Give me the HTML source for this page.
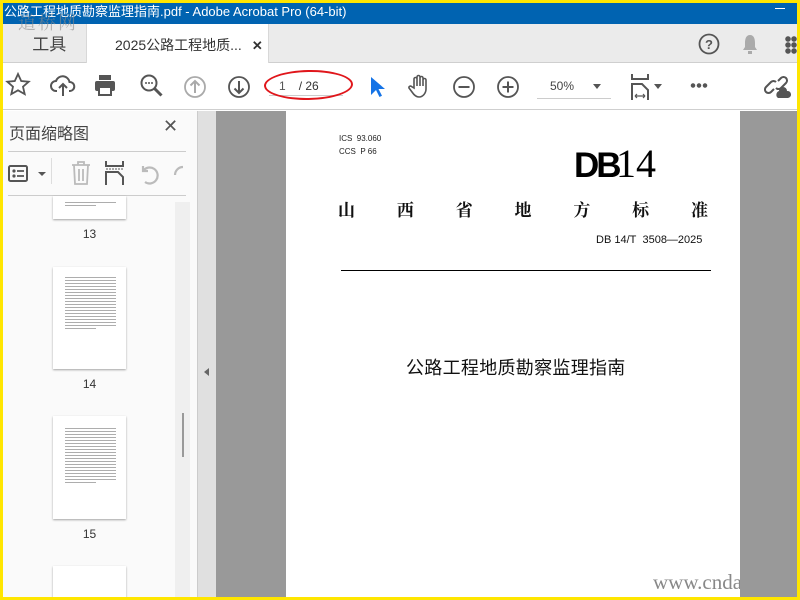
<!DOCTYPE html>
<html><head><meta charset="utf-8"><style>
*{margin:0;padding:0;box-sizing:border-box}
body{width:800px;height:600px;overflow:hidden;background:#ffe600;font-family:"Liberation Sans","Noto Sans CJK SC",sans-serif;position:relative}
.a{position:absolute}
.ic{position:absolute}
.th{position:absolute;left:50px;width:73px;background:#fff;box-shadow:0 1px 2px rgba(0,0,0,.35)}
.th i{display:block;height:1px;background:#777;margin:2px 10px 0 12px;opacity:.6}
.lbl{position:absolute;left:50px;width:73px;text-align:center;font-size:12px;color:#333}
</style></head><body>
<div class="a" style="left:3px;top:3px;width:794px;height:594px;background:#fff;overflow:hidden">
 <div class="a" style="left:0;top:0;width:794px;height:21px;background:#0063b1;color:#fff;font-size:13px;line-height:17px;padding-left:1px">公路工程地质勘察监理指南.pdf - Adobe Acrobat Pro (64-bit)</div>
 <div class="a" style="left:772px;top:5px;width:10px;height:1px;background:#fff"></div>
 <div class="a" style="left:0;top:21px;width:794px;height:39px;background:#ebebeb;border-bottom:1px solid #cfcfcf"></div>
 <div class="a" style="left:15px;top:6px;font-family:'Liberation Serif','Noto Serif CJK SC',serif;font-size:18px;color:#8a8a8a;opacity:.6;letter-spacing:2px">道桥网</div>
 <div class="a" style="left:0;top:21px;width:83px;height:39px;font-size:17px;color:#444;line-height:42px;text-align:center">&nbsp;&nbsp;工具</div>
 <div class="a" style="left:83px;top:21px;width:183px;height:40px;background:#fff;border-left:1px solid #d8d8d8;border-right:1px solid #d8d8d8;font-size:14px;color:#333;line-height:42px;padding-left:28px">2025公路工程地质...<span style="margin-left:10px;font-weight:bold;font-size:13px">✕</span></div>
 <svg class="ic" style="left:695px;top:30px" width="22" height="22"><circle cx="11" cy="11" r="9.5" fill="none" stroke="#555" stroke-width="1.8"/><text x="11" y="16" text-anchor="middle" font-size="13" font-weight="bold" fill="#555" font-family="Liberation Sans">?</text></svg>
 <svg class="ic" style="left:738px;top:30px" width="18" height="22"><path d="M9 2c4 0 5 4 5 8v4l2 3H2l2-3v-4c0-4 1-8 5-8z" fill="#aaa"/><rect x="7" y="18" width="4" height="3" fill="#aaa"/></svg>
 <div class="a" style="left:782px;top:33px;width:12px;height:18px;background:radial-gradient(circle,#555 2.5px,transparent 3px) 0 0/6px 6px"></div>
 <div class="a" style="left:0;top:60px;width:794px;height:47px;background:#fff;border-bottom:1px solid #cfcfcf"></div>
 <svg class="ic" style="left:2px;top:69px" width="26" height="26"><path d="M13 2l3.2 7 7.5.7-5.7 5 1.7 7.4L13 18.3 6.3 22.1 8 14.7 2.3 9.7l7.5-.7z" fill="none" stroke="#555" stroke-width="1.8"/></svg>
 <svg class="ic" style="left:47px;top:70px" width="26" height="26"><path d="M7 18H6a5 5 0 0 1 0-10 7 7 0 0 1 13.5 1A4.5 4.5 0 0 1 20 18h-1" fill="none" stroke="#555" stroke-width="2"/><path d="M13 23V11M9 15l4-4 4 4" fill="none" stroke="#555" stroke-width="2"/></svg>
 <svg class="ic" style="left:90px;top:70px" width="24" height="24"><rect x="6" y="2" width="12" height="5" fill="#555"/><rect x="2" y="8" width="20" height="10" rx="2" fill="#555"/><rect x="6" y="14" width="12" height="8" fill="#fff" stroke="#555" stroke-width="2"/></svg>
 <svg class="ic" style="left:136px;top:70px" width="26" height="26"><circle cx="10" cy="10" r="7.5" fill="none" stroke="#555" stroke-width="2"/><path d="M15.5 15.5l7 7" stroke="#555" stroke-width="3"/><circle cx="7" cy="10" r="1" fill="#555"/><circle cx="10" cy="10" r="1" fill="#555"/><circle cx="13" cy="10" r="1" fill="#555"/></svg>
 <svg class="ic" style="left:180px;top:72px" width="24" height="24"><circle cx="12" cy="12" r="10" fill="none" stroke="#aaa" stroke-width="1.8"/><path d="M12 18V6M7.5 10.5L12 6l4.5 4.5" fill="none" stroke="#aaa" stroke-width="2"/></svg>
 <svg class="ic" style="left:224px;top:72px" width="24" height="24"><circle cx="12" cy="12" r="10" fill="none" stroke="#555" stroke-width="1.8"/><path d="M12 6v12M7.5 13.5L12 18l4.5-4.5" fill="none" stroke="#555" stroke-width="2"/></svg>
 <div class="a" style="left:266px;top:73px;width:74px;height:20px;border-bottom:1px solid #ccc;font-size:12px;color:#333;line-height:20px"><span style="margin-left:10px;color:#555">1</span><span style="margin-left:13px">/ 26</span></div>
 <div class="a" style="left:261px;top:67px;width:89px;height:30px;border:2.5px solid #e0161b;border-radius:50%;transform:rotate(-1deg)"></div>
 <svg class="ic" style="left:366px;top:72px" width="16" height="24"><path d="M2 2v18l5-5 3.5 7 2.5-1.2-3.5-6.8H16z" fill="#1473e6"/></svg>
 <svg class="ic" style="left:404px;top:70px" width="26" height="26"><path d="M7 15V6a1.5 1.5 0 0 1 3 0v7V4a1.5 1.5 0 0 1 3 0v9V5a1.5 1.5 0 0 1 3 0v8V7a1.5 1.5 0 0 1 3 0v9c0 4-3 8-7 8-3 0-5-2-7-5l-3-4a1.5 1.5 0 0 1 2.5-1.5z" fill="none" stroke="#555" stroke-width="1.6"/></svg>
 <svg class="ic" style="left:449px;top:72px" width="24" height="24"><circle cx="12" cy="12" r="10" fill="none" stroke="#555" stroke-width="1.8"/><path d="M6.5 12h11" stroke="#555" stroke-width="2"/></svg>
 <svg class="ic" style="left:493px;top:72px" width="24" height="24"><circle cx="12" cy="12" r="10" fill="none" stroke="#555" stroke-width="1.8"/><path d="M6.5 12h11M12 6.5v11" stroke="#555" stroke-width="2"/></svg>
 <div class="a" style="left:534px;top:73px;width:74px;height:23px;border-bottom:1px solid #ccc;font-size:12px;color:#444;line-height:20px;padding-left:13px">50%</div>
 <div class="a" style="left:590px;top:81px;border:4px solid transparent;border-top:5px solid #555"></div>
 <svg class="ic" style="left:627px;top:70px" width="22" height="28"><path d="M2 1v5h16V1" fill="none" stroke="#555" stroke-width="2"/><path d="M2 27V11h10l6 6v10" fill="none" stroke="#555" stroke-width="2"/><path d="M5 23h10M5 23l2-2M5 23l2 2M15 23l-2-2M15 23l-2 2" stroke="#555" stroke-width="1.2"/></svg>
 <div class="a" style="left:651px;top:81px;border:4px solid transparent;border-top:5px solid #555"></div>
 <div class="a" style="left:687px;top:80px;width:18px;height:5px;background:radial-gradient(circle,#555 2px,transparent 2.5px) 0 0/6px 5px"></div>
 <svg class="ic" style="left:761px;top:70px" width="30" height="26"><path d="M10 16l-3 3a3.5 3.5 0 0 1-5-5l5-5a3.5 3.5 0 0 1 5 0M14 8l3-3a3.5 3.5 0 0 1 5 5l-5 5a3.5 3.5 0 0 1-5 0" fill="none" stroke="#555" stroke-width="2"/><path d="M14 25a4 4 0 0 1 1-7 4 4 0 0 1 8 0 3.5 3.5 0 0 1 1 7z" fill="#555"/></svg>
 <div class="a" style="left:0;top:108px;width:194px;height:486px;background:#fafafa"></div>
 <div class="a" style="left:6px;top:117px;font-size:16px;color:#444">页面缩略图</div>
 <div class="a" style="left:160px;top:113px;font-size:18px;color:#555">✕</div>
 <div class="a" style="left:5px;top:148px;width:178px;height:1px;background:#ccc"></div>
 <div class="a" style="left:5px;top:192px;width:178px;height:1px;background:#ccc"></div>
 <svg class="ic" style="left:5px;top:161px" width="40" height="20"><rect x="1" y="2" width="18" height="15" rx="1.5" fill="none" stroke="#555" stroke-width="2"/><circle cx="6" cy="7" r="1.6" fill="#555"/><circle cx="6" cy="12" r="1.6" fill="#555"/><path d="M9 7h7M9 12h7" stroke="#555" stroke-width="1.8"/><path d="M30 8h8l-4 4z" fill="#555"/></svg>
 <div class="a" style="left:48px;top:155px;width:1px;height:26px;background:#ddd"></div>
 <svg class="ic" style="left:67px;top:158px" width="22" height="24"><path d="M2 4h18M8 4V1h6v3M4 4l1 19h12l1-19M9 8v12M13 8v12" fill="none" stroke="#bbb" stroke-width="1.8"/></svg>
 <svg class="ic" style="left:101px;top:158px" width="22" height="24"><path d="M2 0v5h17V0M2 24V11h12l5 5v8" fill="none" stroke="#555" stroke-width="2"/><path d="M2 8h17" stroke="#555" stroke-width="1" stroke-dasharray="2 1"/></svg>
 <svg class="ic" style="left:134px;top:160px" width="24" height="22"><path d="M8 19a8 8 0 1 0-2-11M6 3v5h5" fill="none" stroke="#bbb" stroke-width="2.2"/></svg>
 <svg class="ic" style="left:168px;top:160px" width="12" height="22"><path d="M12 4a8 8 0 0 0-8 8" fill="none" stroke="#bbb" stroke-width="2.2"/></svg>
 <div class="a" style="left:172px;top:199px;width:15px;height:395px;background:#efefef"></div>
 <div class="a" style="left:179px;top:410px;width:2px;height:44px;background:#999"></div>
 <div class="th" style="top:193px;height:23px"><i style="margin-top:6px"></i><i style="margin-right:30px"></i></div>
 <div class="lbl" style="top:224px">13</div>
 <div class="th" style="top:264px;height:102px;padding-top:8px"><i></i><i></i><i></i><i></i><i></i><i></i><i></i><i></i><i></i><i></i><i></i><i></i><i></i><i></i><i></i><i></i><i></i><i style="margin-right:30px"></i></div>
 <div class="lbl" style="top:374px">14</div>
 <div class="th" style="top:413px;height:103px;padding-top:10px"><i></i><i></i><i></i><i></i><i></i><i></i><i></i><i></i><i></i><i></i><i></i><i></i><i></i><i></i><i></i><i></i><i></i><i></i><i style="margin-right:30px"></i></div>
 <div class="lbl" style="top:524px">15</div>
 <div class="th" style="top:563px;height:40px"></div>
 <div class="a" style="left:194px;top:108px;width:19px;height:486px;background:#e0e0e0;border-left:1px solid #ccc"></div>
 <div class="a" style="left:201px;top:365px;border:4px solid transparent;border-right:5px solid #666;border-left:0"></div>
 <div class="a" style="left:213px;top:108px;width:581px;height:486px;background:#999"></div>
 <div class="a" style="left:283px;top:108px;width:454px;height:486px;background:#fff;overflow:hidden">
  <div class="a" style="left:53px;top:21px;font-size:8px;color:#222;line-height:13px">ICS&nbsp;&nbsp;93.060<br>CCS&nbsp;&nbsp;P 66</div>
  <div class="a" style="left:288px;top:37px;font-size:35px;font-weight:900;color:#000;line-height:36px;letter-spacing:-3px">DB</div>
  <div class="a" style="left:330px;top:33px;font-family:'Liberation Serif',serif;font-size:40px;color:#000;line-height:40px">14</div>
  <div class="a" style="left:52px;top:85px;width:370px;display:flex;justify-content:space-between;font-size:17px;font-weight:bold;color:#111;font-family:'Noto Serif CJK SC',serif"><span>山</span><span>西</span><span>省</span><span>地</span><span>方</span><span>标</span><span>准</span></div>
  <div class="a" style="left:310px;top:123px;font-size:11px;color:#111">DB 14/T&nbsp; 3508—2025</div>
  <div class="a" style="left:55px;top:159px;width:370px;height:1px;background:#000"></div>
  <div class="a" style="left:120px;top:243px;font-size:18px;color:#111;letter-spacing:.3px">公路工程地质勘察监理指南</div>
  <div class="a" style="left:367px;top:459px;font-family:'Liberation Serif',serif;font-size:21px;color:#888;white-space:nowrap">www.cndac</div>
 </div>
</div>
</body></html>
